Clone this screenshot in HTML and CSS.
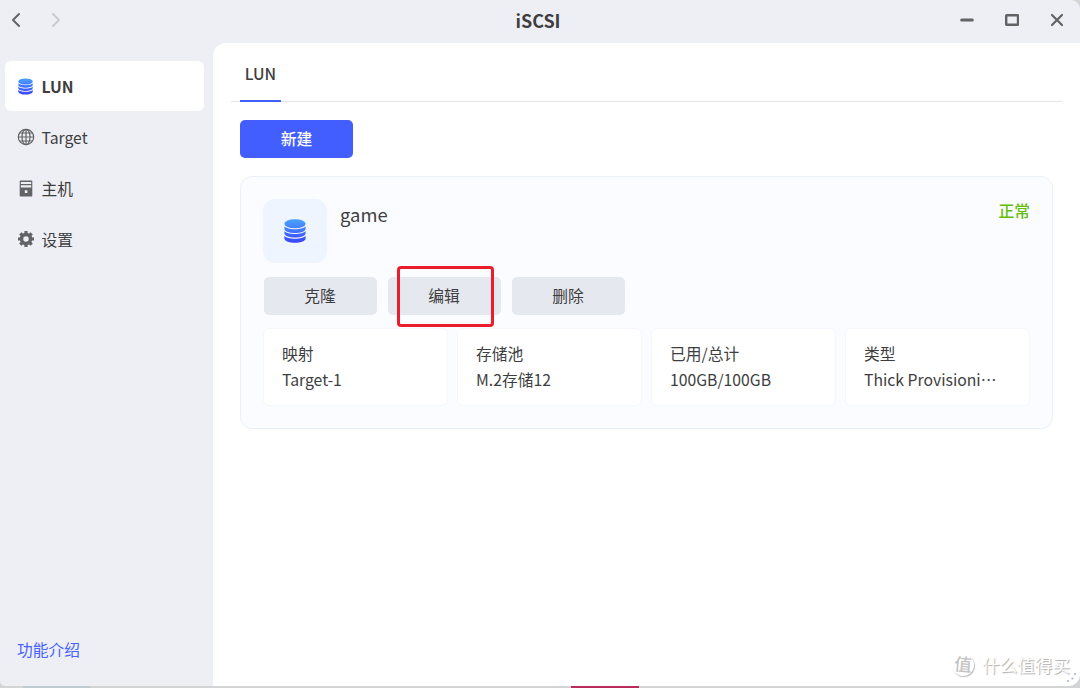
FILE: index.html
```html
<!DOCTYPE html>
<html lang="zh-CN">
<head>
<meta charset="utf-8">
<title>iSCSI</title>
<link rel="stylesheet" href="styles.css">
</head>
<body>
<svg class="defs" width="0" height="0" aria-hidden="true">
  <defs>
    <linearGradient id="disk" gradientUnits="userSpaceOnUse" x1="0" y1="0" x2="0" y2="24">
      <stop offset="0.1" stop-color="#489bff"/>
      <stop offset="1" stop-color="#3b42fb"/>
    </linearGradient>
    <symbol id="database" viewBox="0 0 22 24">
      <g fill="url(#disk)">
        <ellipse cx="11" cy="4.7" rx="10.6" ry="4.5"/>
        <path d="M.4 7.3C3 11.2 19 11.2 21.6 7.3V9.9C20.500 15.300 1.500 15.300 .4 9.9Z"/>
        <path d="M.4 12C3 16 19 16 21.6 12V14.600C20.500 19.900 1.500 19.900 .4 14.600Z"/>
        <path d="M.4 16.700C3 20.700 19 20.700 21.600 16.700V19.700C20.500 25.200 1.500 25.200 .4 19.700Z"/>
      </g>
    </symbol>
  </defs>
</svg>
<div class="window">
  <header class="titlebar">
    <div class="history">
      <svg width="8" height="14" viewBox="0 0 8 14"><path class="back" d="M7 1 1 7l6 6"/></svg>
      <svg width="8" height="14" viewBox="0 0 8 14"><path class="forward" d="m1 1 6 6-6 6"/></svg>
    </div>
    <h1 class="title">iSCSI</h1>
    <div class="controls">
      <svg width="14" height="14" viewBox="0 0 14 14"><path d="M1.700 7H12.300" stroke-width="3"/></svg>
      <svg width="14" height="14" viewBox="0 0 14 14"><rect x="1.200" y="2.200" width="11.800" height="9.600" rx=".5" stroke-width="2.400"/></svg>
      <svg width="14" height="14" viewBox="0 0 14 14"><path d="m2 2 10 10M12 2 2 12" stroke-width="2.200"/></svg>
    </div>
  </header>
  <div class="body">
    <aside class="sidebar">
      <nav class="nav">
        <a class="nav-item active"><svg width="15" height="17"><use href="#database"/></svg><span>LUN</span></a>
        <a class="nav-item">
          <svg width="18" height="18" viewBox="0 0 18 18" fill="none" stroke="#626365" stroke-width="1.200"><circle cx="9" cy="9" r="7.700"/><ellipse cx="9" cy="9" rx="4" ry="7.700"/><path d="M9 1v16M1 9h16M2.500 5h13M2.500 13h13"/></svg>
          <span>Target</span>
        </a>
        <a class="nav-item">
          <svg width="14" height="17" viewBox="0 0 14 17"><path fill="#626365" fill-rule="evenodd" d="M1.500.5h11q.8 0 .8.800v14.400q0 .8-.8.800h-11q-.8 0-.8-.8V1.300q0-.8.800-.8ZM1.800 2v1.900h10.400V2ZM1.800 5.200v2.300h10.400V5.200ZM5.800 10.300v2.600h2.600v-2.600Z"/></svg>
          <span>主机</span>
        </a>
        <a class="nav-item">
          <svg width="18" height="18" viewBox="0 0 18 18"><circle cx="9" cy="9" r="4.500" fill="none" stroke="#626365" stroke-width="3.500"/><path d="M9 1v3M9 14v3M1 9h3M14 9h3M3.300 3.300l2.200 2.200M12.500 12.500l2.200 2.200M3.300 14.700l2.200-2.200M12.500 5.500l2.200-2.200" stroke="#626365" stroke-width="3.200"/></svg>
          <span>设置</span>
        </a>
      </nav>
      <a class="intro">功能介绍</a>
    </aside>
    <main class="content">
      <div class="tabs"><span class="tab">LUN</span></div>
      <button class="button primary">新建</button>
      <section class="card">
        <div class="card-head">
          <div class="thumb"><svg width="22" height="24"><use href="#database"/></svg></div>
          <h2 class="name">game</h2>
          <span class="status">正常</span>
        </div>
        <div class="actions">
          <button class="button">克隆</button>
          <button class="button marked">编辑</button>
          <button class="button">删除</button>
        </div>
        <div class="facts">
          <div class="fact"><div>映射</div><div>Target-1</div></div>
          <div class="fact"><div>存储池</div><div>M.2存储12</div></div>
          <div class="fact"><div>已用/总计</div><div>100GB/100GB</div></div>
          <div class="fact"><div>类型</div><div>Thick Provisioni⋯</div></div>
        </div>
      </section>
    </main>
  </div>
  <div class="watermark"><span class="seal">值</span><span>什么值得买</span></div>
  <svg class="grip" width="12" height="12" viewBox="0 0 12 12" fill="#a9b4f3"><circle cx="10" cy="2" r="1.100"/><circle cx="7.500" cy="6.500" r="1.100"/><circle cx="3" cy="9" r="1.100"/></svg>
</div>
<div class="backdrop"><i class="backdrop-blue"></i><i class="backdrop-red"></i></div>
</body>
</html>
```
FILE: styles.css
```css
* { box-sizing: border-box; }
body {
  margin: 0;
  width: 1080px;
  height: 688px;
  overflow: hidden;
  display: flex;
  flex-direction: column;
  background: #d3d4d6;
  color: #3e3e40;
  font: 15.75px/24px "Noto Sans CJK SC", sans-serif;
}
svg { display: block; flex: none; }
.defs { position: absolute; }
.window {
  position: relative;
  height: 686px;
  display: flex;
  flex-direction: column;
  overflow: hidden;
  background: #eeeff5;
  border-radius: 0 9px 12px 5px;
}
.titlebar {
  height: 43px;
  padding: 0 16px 3px 12px;
  display: grid;
  grid-template-columns: 1fr auto 1fr;
  align-items: center;
}
.history { display: flex; gap: 32px; fill: none; }
.history path { stroke-width: 1.900; stroke-linecap: round; stroke-linejoin: round; }
.back { stroke: #626365; }
.forward { stroke: #c9cacf; }
.title { margin: 0; font-size: 18px; line-height: 26px; font-weight: 700; }
.controls { display: flex; justify-content: flex-end; gap: 31px; fill: none; stroke: #626365; stroke-linecap: round; }
.body { flex: 1; display: flex; }
.sidebar {
  width: 213px;
  padding: 18px 9px 24px 5px;
  display: flex;
  flex-direction: column;
  justify-content: space-between;
}
.nav { display: flex; flex-direction: column; gap: 1px; }
.nav-item {
  height: 50px;
  padding-left: 11px;
  display: grid;
  grid-template-columns: 19px 1fr;
  column-gap: 6.5px;
  align-items: center;
  border-radius: 6px;
}
.nav-item svg { justify-self: center; }
.nav-item span { padding-top: 1px; }
.active { background: #fff; font-weight: 700; }
.intro { padding-left: 12px; color: #4662ff; }
.content {
  flex: 1;
  background: #fff;
  border-top-left-radius: 13px;
  padding: 0 18px;
}
.tabs {
  height: 59px;
  padding-left: 9px;
  display: flex;
  border-bottom: 1px solid #e4e5e7;
}
.tab {
  width: 41px;
  height: 59px;
  padding-top: 19px;
  text-align: center;
  font-weight: 500;
  border-bottom: 2px solid #425eff;
}
.button {
  width: 113px;
  height: 38px;
  padding: 0;
  border: 0;
  border-radius: 5px;
  background: #e6e8ef;
  color: inherit;
  font: inherit;
}
.primary { display: block; margin: 18px 0 18px 9px; background: #425eff; color: #fff; font-weight: 500; }
.card {
  width: 813px;
  height: 253px;
  margin-left: 9px;
  padding: 22px 22px 0;
  background: #fafcff;
  border: 1px solid #e9f0f7;
  border-radius: 12px;
}
.card-head { height: 64px; display: flex; align-items: flex-start; }
.thumb {
  width: 64px;
  height: 64px;
  border-radius: 12px;
  background: #eef5ff;
  display: grid;
  place-items: center;
}
.name { margin: 2px 0 0 13px; font-size: 18.4px; line-height: 26px; font-weight: 400; }
.status { margin-left: auto; color: #66be0c; font-weight: 500; }
.actions { display: flex; gap: 11px; margin: 13.5px 0 0 .5px; }
.actions .button { height: 38.5px; padding-top: 1px; }
.marked { position: relative; }
.marked::after {
  content: "";
  box-sizing: border-box;
  position: absolute;
  left: 9px;
  top: -11px;
  width: 97px;
  height: 61px;
  border: 3px solid #ea1d2c;
  border-radius: 4px;
}
.facts { display: grid; grid-template-columns: repeat(4, 185px); gap: 9px; margin-top: 13px; }
.fact {
  height: 78px;
  padding: 12px 0 0 18px;
  line-height: 26px;
  white-space: nowrap;
  background: #fff;
  border: 1px solid #f4f7fc;
  border-radius: 6px;
}
.watermark {
  position: absolute;
  right: 10px;
  bottom: 9px;
  display: flex;
  align-items: center;
  gap: 8px;
  color: #fff;
  font-size: 17.6px;
  text-shadow: 1px 1px 1px #aaa;
}
.seal {
  width: 22px;
  height: 22px;
  border-radius: 50%;
  box-shadow: 1px 1px 1px #bbb;
  line-height: 20px;
  text-align: center;
  color: #c4c4c4;
  text-shadow: none;
  font-weight: 500;
  transform: rotate(5deg);
}
.grip { position: absolute; right: 3px; bottom: 2px; }
.backdrop { flex: 1; display: flex; }
.backdrop-blue { width: 68px; margin-left: 23px; background: #bfcbd0; }
.backdrop-red { width: 68px; margin-left: 480px; background: #b92b5d; }
```
